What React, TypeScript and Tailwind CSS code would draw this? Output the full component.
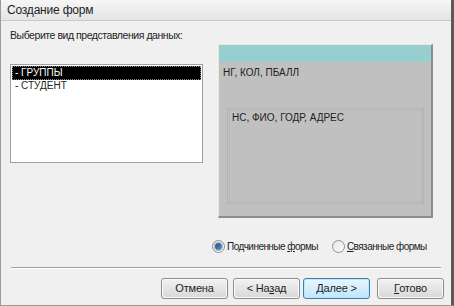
import React from 'react'

const font = { fontFamily: '"Liberation Sans", Arial, sans-serif' }

function Radio({ checked }: { checked?: boolean }) {
  return (
    <span className="relative inline-flex h-[13px] w-[13px] shrink-0 items-center justify-center rounded-full border border-[#8e8f8f] bg-gradient-to-br from-[#e6e6e6] to-[#fbfbfb]">
      {checked && <span className="h-[7px] w-[7px] rounded-full bg-gradient-to-br from-[#2a4f7d] to-[#5f95c9] ring-1 ring-[#9cc0e0]" />}
    </span>
  )
}

function Btn({ children, focused }: { children: React.ReactNode; focused?: boolean }) {
  return (
    <button
      type="button"
      className={
        focused
          ? 'h-[21px] w-[67px] whitespace-nowrap rounded-[3px] border border-[#3c7fb1] bg-gradient-to-b from-[#eaf6fd] to-[#bee6fd] text-[11px] tracking-[-0.2px] text-[#1e1e1e] shadow-[inset_0_0_0_1px_#bfe7fc]'
          : 'h-[21px] w-[67px] whitespace-nowrap rounded-[3px] border border-[#8b8b8b] bg-gradient-to-b from-[#f2f2f2] to-[#d8d8d8] text-[11px] tracking-[-0.2px] text-[#1e1e1e] shadow-[inset_0_0_0_1px_#fafafa]'
      }
    >
      {children}
    </button>
  )
}

export default function App() {
  return (
    <div style={font} className="flex h-[306px] w-[454px] flex-col whitespace-nowrap border-b border-l border-r-[3px] border-[#9a9a9a] border-r-[#5a5a5a] bg-[#f0f0f0] text-[#1e1e1e]">
      <div className="flex h-[21px] shrink-0 items-center border-b border-[#c9c9c9] bg-gradient-to-b from-[#f6f6f6] to-[#e4e4e4] pl-[6px] text-[12px] tracking-[-0.2px]">
        Создание форм
      </div>

      <div className="flex h-[199px] shrink-0">
        <div className="flex w-[202px] shrink-0 flex-col pl-[9px]">
          <div className="mt-[7px] text-[10.5px] leading-[14px] tracking-[-0.45px]">Выберите вид представления данных:</div>
          <div className="mt-[22px] h-[99px] w-[193px] border border-[#a0a0a0] bg-white p-px text-[10px] leading-[12px]">
            <div className="border border-dotted border-[#888] bg-black pl-[2px] text-white">- ГРУППЫ</div>
            <div className="pl-[3px]">- СТУДЕНТ</div>
          </div>
        </div>
        <div className="ml-[15px] mt-[23px] flex h-[174px] w-[215px] flex-col border-l border-t border-[#e8e8e8] border-b-2 border-r-2 border-b-[#8c8c8c] border-r-[#8c8c8c] bg-[#c0c0c0]">
          <div className="h-[17px] shrink-0 bg-[#97cece]" />
          <div className="pl-[4px] pt-[5px] text-[10px] leading-[12px]">НГ, КОЛ, ПБАЛЛ</div>
          <div className="ml-[8px] mt-[29px] h-[96px] w-[197px] border border-[#b3b3b3] p-px">
            <div className="h-full w-full border border-[#b8b8b8] pl-[2px] pt-[1px] text-[10px] leading-[12px]">
              НС, ФИО, ГОДР, АДРЕС
            </div>
          </div>
        </div>
      </div>

      <div className="mt-[18px] flex h-[16px] items-center pl-[211px] text-[10px] tracking-[-0.55px]">
        <Radio checked />
        <span className="ml-[2px]">
          Подчиненные <span className="underline">ф</span>ормы
        </span>
        <span className="ml-[14px] flex">
          <Radio />
        </span>
        <span className="ml-[2px]">
          <span className="underline">С</span>вязанные формы
        </span>
      </div>

      <div className="mx-[10px] mt-[13px] border-t border-[#a0a0a0] border-b border-b-white" />

      <div className="mt-[9px] flex items-center pl-[160px]">
        <Btn>Отмена</Btn>
        <span className="ml-[5px] flex">
          <Btn>
            &lt; На<span className="underline">з</span>ад
          </Btn>
        </span>
        <span className="ml-[3px] flex">
          <Btn focused>
            <span className="underline">Д</span>алее &gt;
          </Btn>
        </span>
        <span className="ml-[7px] flex">
          <Btn>
            <span className="underline">Г</span>отово
          </Btn>
        </span>
      </div>
    </div>
  )
}
